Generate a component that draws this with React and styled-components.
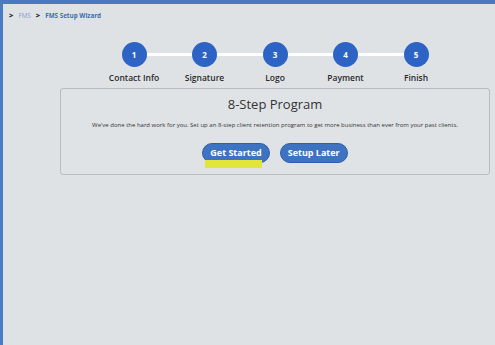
import React from 'react';
import styled, { createGlobalStyle } from 'styled-components';

const GlobalStyle = createGlobalStyle`
  html, body {
    margin: 0;
    padding: 0;
    background: #dfe2e5;
    font-family: 'Open Sans', 'Liberation Sans', sans-serif;
  }
`;

const Frame = styled.div`
  height: 345px;
  box-sizing: border-box;
  border-top: 4px solid #4a79c2;
  border-left: 3px solid #4a7bc4;
  background: #dfe2e5;
  overflow: hidden;
`;

const Breadcrumb = styled.nav`
  display: flex;
  align-items: center;
  gap: 5px;
  height: 14px;
  margin-top: 4px;
  padding-left: 6px;
  font-size: 6.3px;
`;

const Chevron = styled.span`
  color: #222;
  font-weight: 800;
  font-size: 7.5px;
`;

const Crumb = styled.span`
  color: ${(p) => (p.$current ? '#3b6db6' : '#7f9fd3')};
  font-weight: ${(p) => (p.$current ? 700 : 400)};
`;

const Main = styled.main`
  margin: 20px 5px 0 57px;
`;

const Steps = styled.ol`
  display: flex;
  justify-content: center;
  list-style: none;
  margin: 0;
  padding: 0;
`;

const Step = styled.li`
  position: relative;
  width: 70.5px;
  display: flex;
  flex-direction: column;
  align-items: center;

  &:not(:last-child)::after {
    content: '';
    position: absolute;
    top: 11px;
    left: 50%;
    width: 100%;
    height: 3px;
    background: #ffffff;
  }
`;

const Circle = styled.span`
  position: relative;
  z-index: 1;
  width: 25px;
  height: 25px;
  border-radius: 50%;
  background: #2c63c4;
  color: #fff;
  font-size: 8px;
  font-weight: 700;
  display: flex;
  align-items: center;
  justify-content: center;
`;

const StepLabel = styled.span`
  margin-top: 5px;
  font-size: 8.5px;
  font-weight: 600;
  color: #2a2a2a;
  white-space: nowrap;
`;

const Card = styled.section`
  margin-top: 5px;
  height: 87px;
  box-sizing: border-box;
  border: 1px solid #b9bcbf;
  border-radius: 3px;
  background: #e0e3e6;
  display: flex;
  flex-direction: column;
  align-items: center;
  padding-top: 6px;
`;

const Title = styled.h2`
  margin: 0;
  font-size: 13px;
  font-weight: 400;
  color: #333;
  line-height: 18px;
`;

const Description = styled.p`
  margin: 8px 0 0;
  font-size: 6px;
  color: #333;
  line-height: 8px;
  white-space: nowrap;
`;

const Actions = styled.div`
  display: flex;
  gap: 10px;
  margin-top: 10px;
`;

const ButtonWrap = styled.div`
  position: relative;
`;

const Button = styled.button`
  height: 20px;
  padding: 0 7px;
  border-radius: 10px;
  border: 1px solid #2f5ea8;
  background: #3e73c1;
  color: #fff;
  font-family: 'Open Sans', 'Liberation Sans', sans-serif;
  font-size: 9px;
  font-weight: 700;
  cursor: pointer;
`;

const Highlight = styled.span`
  position: absolute;
  left: 3px;
  top: 21px;
  width: 57px;
  height: 8px;
  background: #e2e53a;
`;

const steps = ['Contact Info', 'Signature', 'Logo', 'Payment', 'Finish'];

const App = () => (
  <>
    <GlobalStyle />
    <Frame>
      <Breadcrumb>
        <Chevron>&gt;</Chevron>
        <Crumb>FMS</Crumb>
        <Chevron>&gt;</Chevron>
        <Crumb $current>FMS Setup Wizard</Crumb>
      </Breadcrumb>
      <Main>
        <Steps>
          {steps.map((label, i) => (
            <Step key={label}>
              <Circle>{i + 1}</Circle>
              <StepLabel>{label}</StepLabel>
            </Step>
          ))}
        </Steps>
        <Card>
          <Title>8-Step Program</Title>
          <Description>
            We've done the hard work for you. Set up an 8-step client retention program to get more business than ever from your past clients.
          </Description>
          <Actions>
            <ButtonWrap>
              <Button type="button">Get Started</Button>
              <Highlight />
            </ButtonWrap>
            <ButtonWrap>
              <Button type="button">Setup Later</Button>
            </ButtonWrap>
          </Actions>
        </Card>
      </Main>
    </Frame>
  </>
);

export default App;
